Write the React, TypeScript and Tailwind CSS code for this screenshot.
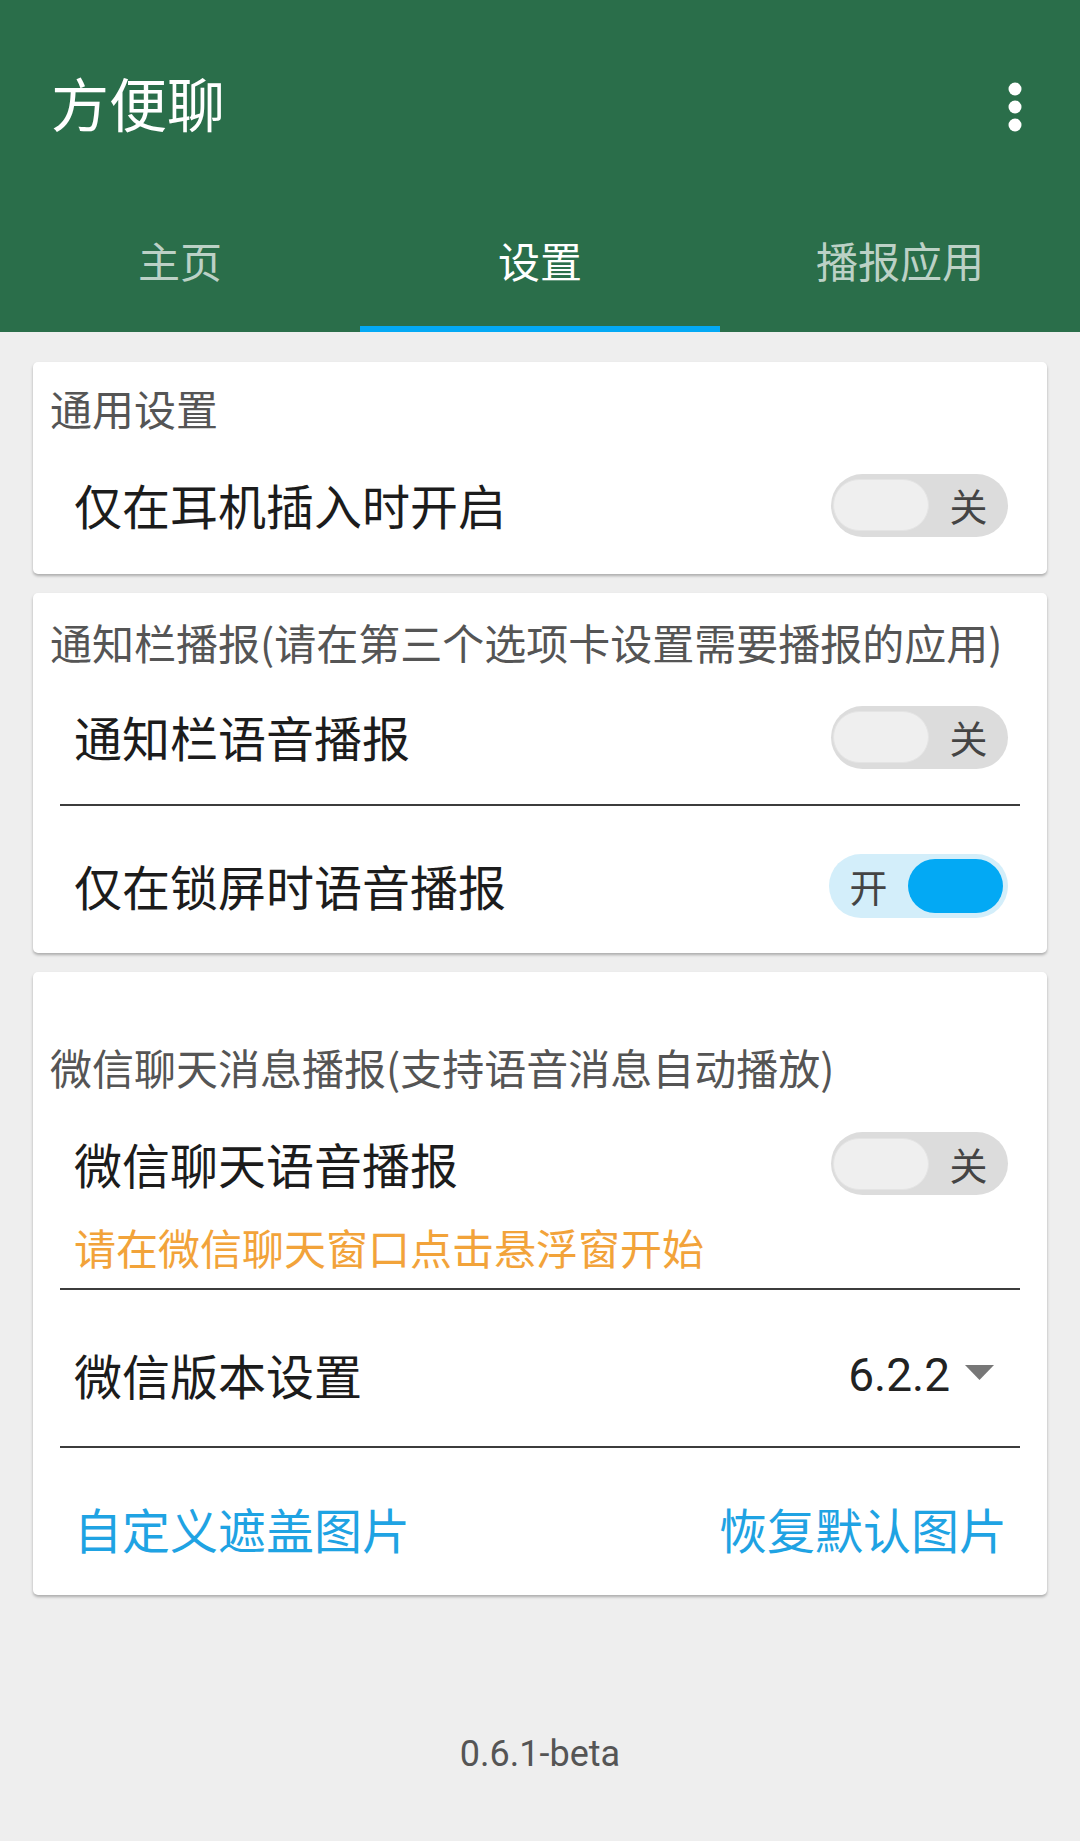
import React from "react";

const TABS = ["主页", "设置", "播报应用"];

function Toggle({ on }: { on: boolean }) {
  if (on) {
    return (
      <div className="flex h-[64px] w-[179px] items-center rounded-full bg-[#d3eefa] pr-[5px]">
        <span className="flex-1 text-center text-[38px] leading-none text-[#444]">开</span>
        <span className="h-[54px] w-[95px] rounded-full bg-[#03a9f4]" />
      </div>
    );
  }
  return (
    <div className="flex h-[63px] w-[177px] items-center rounded-full bg-[#dcdcdc] pl-[2px]">
      <span className="h-[52px] w-[96px] rounded-full border border-[#e4e4e4] bg-[#efefef]" />
      <span className="flex-1 text-center text-[38px] leading-none text-[#444]">关</span>
    </div>
  );
}

function Divider() {
  return <div className="mx-[27px] h-[2px] bg-[#3c3c3c]" />;
}

function Card({ children, className }: { children: React.ReactNode; className?: string }) {
  return (
    <div className={"rounded-[5px] bg-white shadow-[0_2px_3px_rgba(0,0,0,0.28)] " + (className ?? "")}>
      {children}
    </div>
  );
}

export default function App() {
  return (
    <div className="flex min-h-[1841px] w-[1080px] flex-col bg-[#eeeeee] font-['Noto_Sans_CJK_SC',sans-serif]">
      {/* App bar + tabs */}
      <div className="bg-[#2a6e4a]">
        <div className="flex h-[214px] items-center justify-between pl-[51px] pr-[58px]">
          <h1 className="pb-[10px] text-[58px] leading-none text-white">方便聊</h1>
          <svg width="14" height="50" viewBox="0 0 14 50" fill="white">
            <circle cx="7" cy="7" r="6.5" />
            <circle cx="7" cy="25" r="6.5" />
            <circle cx="7" cy="43" r="6.5" />
          </svg>
        </div>
        <div className="flex h-[118px]">
          {TABS.map((t, i) => (
            <div key={t} className="flex flex-1 flex-col">
              <div
                className={
                  "flex flex-1 items-center justify-center pb-[20px] text-[42px] leading-none " +
                  (i === 1 ? "text-white" : "text-white/70")
                }
              >
                {t}
              </div>
              <div className={"h-[6px] " + (i === 1 ? "bg-[#03a9f4]" : "bg-transparent")} />
            </div>
          ))}
        </div>
      </div>

      <div className="flex flex-col px-[33px] pt-[30px]">
        {/* 通用设置 */}
        <Card>
          <div className="pl-[17px] pt-[21px] pb-[3px] text-[42px] leading-[50px] text-[#555]">通用设置</div>
          <div className="flex h-[138px] items-center justify-between pl-[41px] pr-[39px]">
            <span className="pb-[2px] text-[48px] leading-none text-[#1c1c1c]">仅在耳机插入时开启</span>
            <Toggle on={false} />
          </div>
        </Card>

        {/* 通知栏播报 */}
        <Card className="mt-[19px]">
          <div className="pl-[17px] pt-[24px] pb-[3px] text-[42px] leading-[50px] text-[#555]">
            通知栏播报(请在第三个选项卡设置需要播报的应用)
          </div>
          <div className="flex h-[134px] items-center justify-between pl-[41px] pr-[39px]">
            <span className="pb-[2px] text-[48px] leading-none text-[#1c1c1c]">通知栏语音播报</span>
            <Toggle on={false} />
          </div>
          <Divider />
          <div className="flex h-[147px] items-center justify-between pl-[41px] pr-[39px] pt-[13px]">
            <span className="pb-[2px] text-[48px] leading-none text-[#1c1c1c]">仅在锁屏时语音播报</span>
            <Toggle on />
          </div>
        </Card>

        {/* 微信聊天消息播报 */}
        <Card className="mt-[19px]">
          <div className="pl-[17px] pt-[70px] pb-[3px] text-[42px] leading-[50px] text-[#555]">
            微信聊天消息播报(支持语音消息自动播放)
          </div>
          <div className="flex items-center justify-between pl-[41px] pr-[39px] pt-[37px]">
            <span className="pb-[2px] text-[48px] leading-none text-[#1c1c1c]">微信聊天语音播报</span>
            <Toggle on={false} />
          </div>
          <div className="mt-[27px] pb-[3px] pl-[41px] text-[42px] leading-[50px] text-[#f2a33a]">
            请在微信聊天窗口点击悬浮窗开始
          </div>
          <div className="mt-[13px]">
            <Divider />
          </div>
          <div className="flex h-[156px] items-center justify-between pl-[41px] pr-[53px] pt-[14px]">
            <span className="pb-[2px] text-[48px] leading-none text-[#1c1c1c]">微信版本设置</span>
            <div className="flex items-center gap-[15px]">
              <span className="font-['Roboto',sans-serif] text-[46px] leading-none text-[#222]">6.2.2</span>
              <svg width="29" height="15" viewBox="0 0 29 15" className="mb-[6px]">
                <polygon points="0,0 29,0 14.5,15" fill="#777" />
              </svg>
            </div>
          </div>
          <Divider />
          <div className="flex h-[147px] items-center justify-between pl-[41px] pr-[40px] pt-[12px]">
            <span className="text-[48px] leading-none text-[#1fa3e3]">自定义遮盖图片</span>
            <span className="text-[48px] leading-none text-[#1fa3e3]">恢复默认图片</span>
          </div>
        </Card>

        <div className="mt-[138px] text-center font-['Roboto',sans-serif] text-[36px] leading-[43px] text-[#555]">
          0.6.1-beta
        </div>
      </div>
    </div>
  );
}
